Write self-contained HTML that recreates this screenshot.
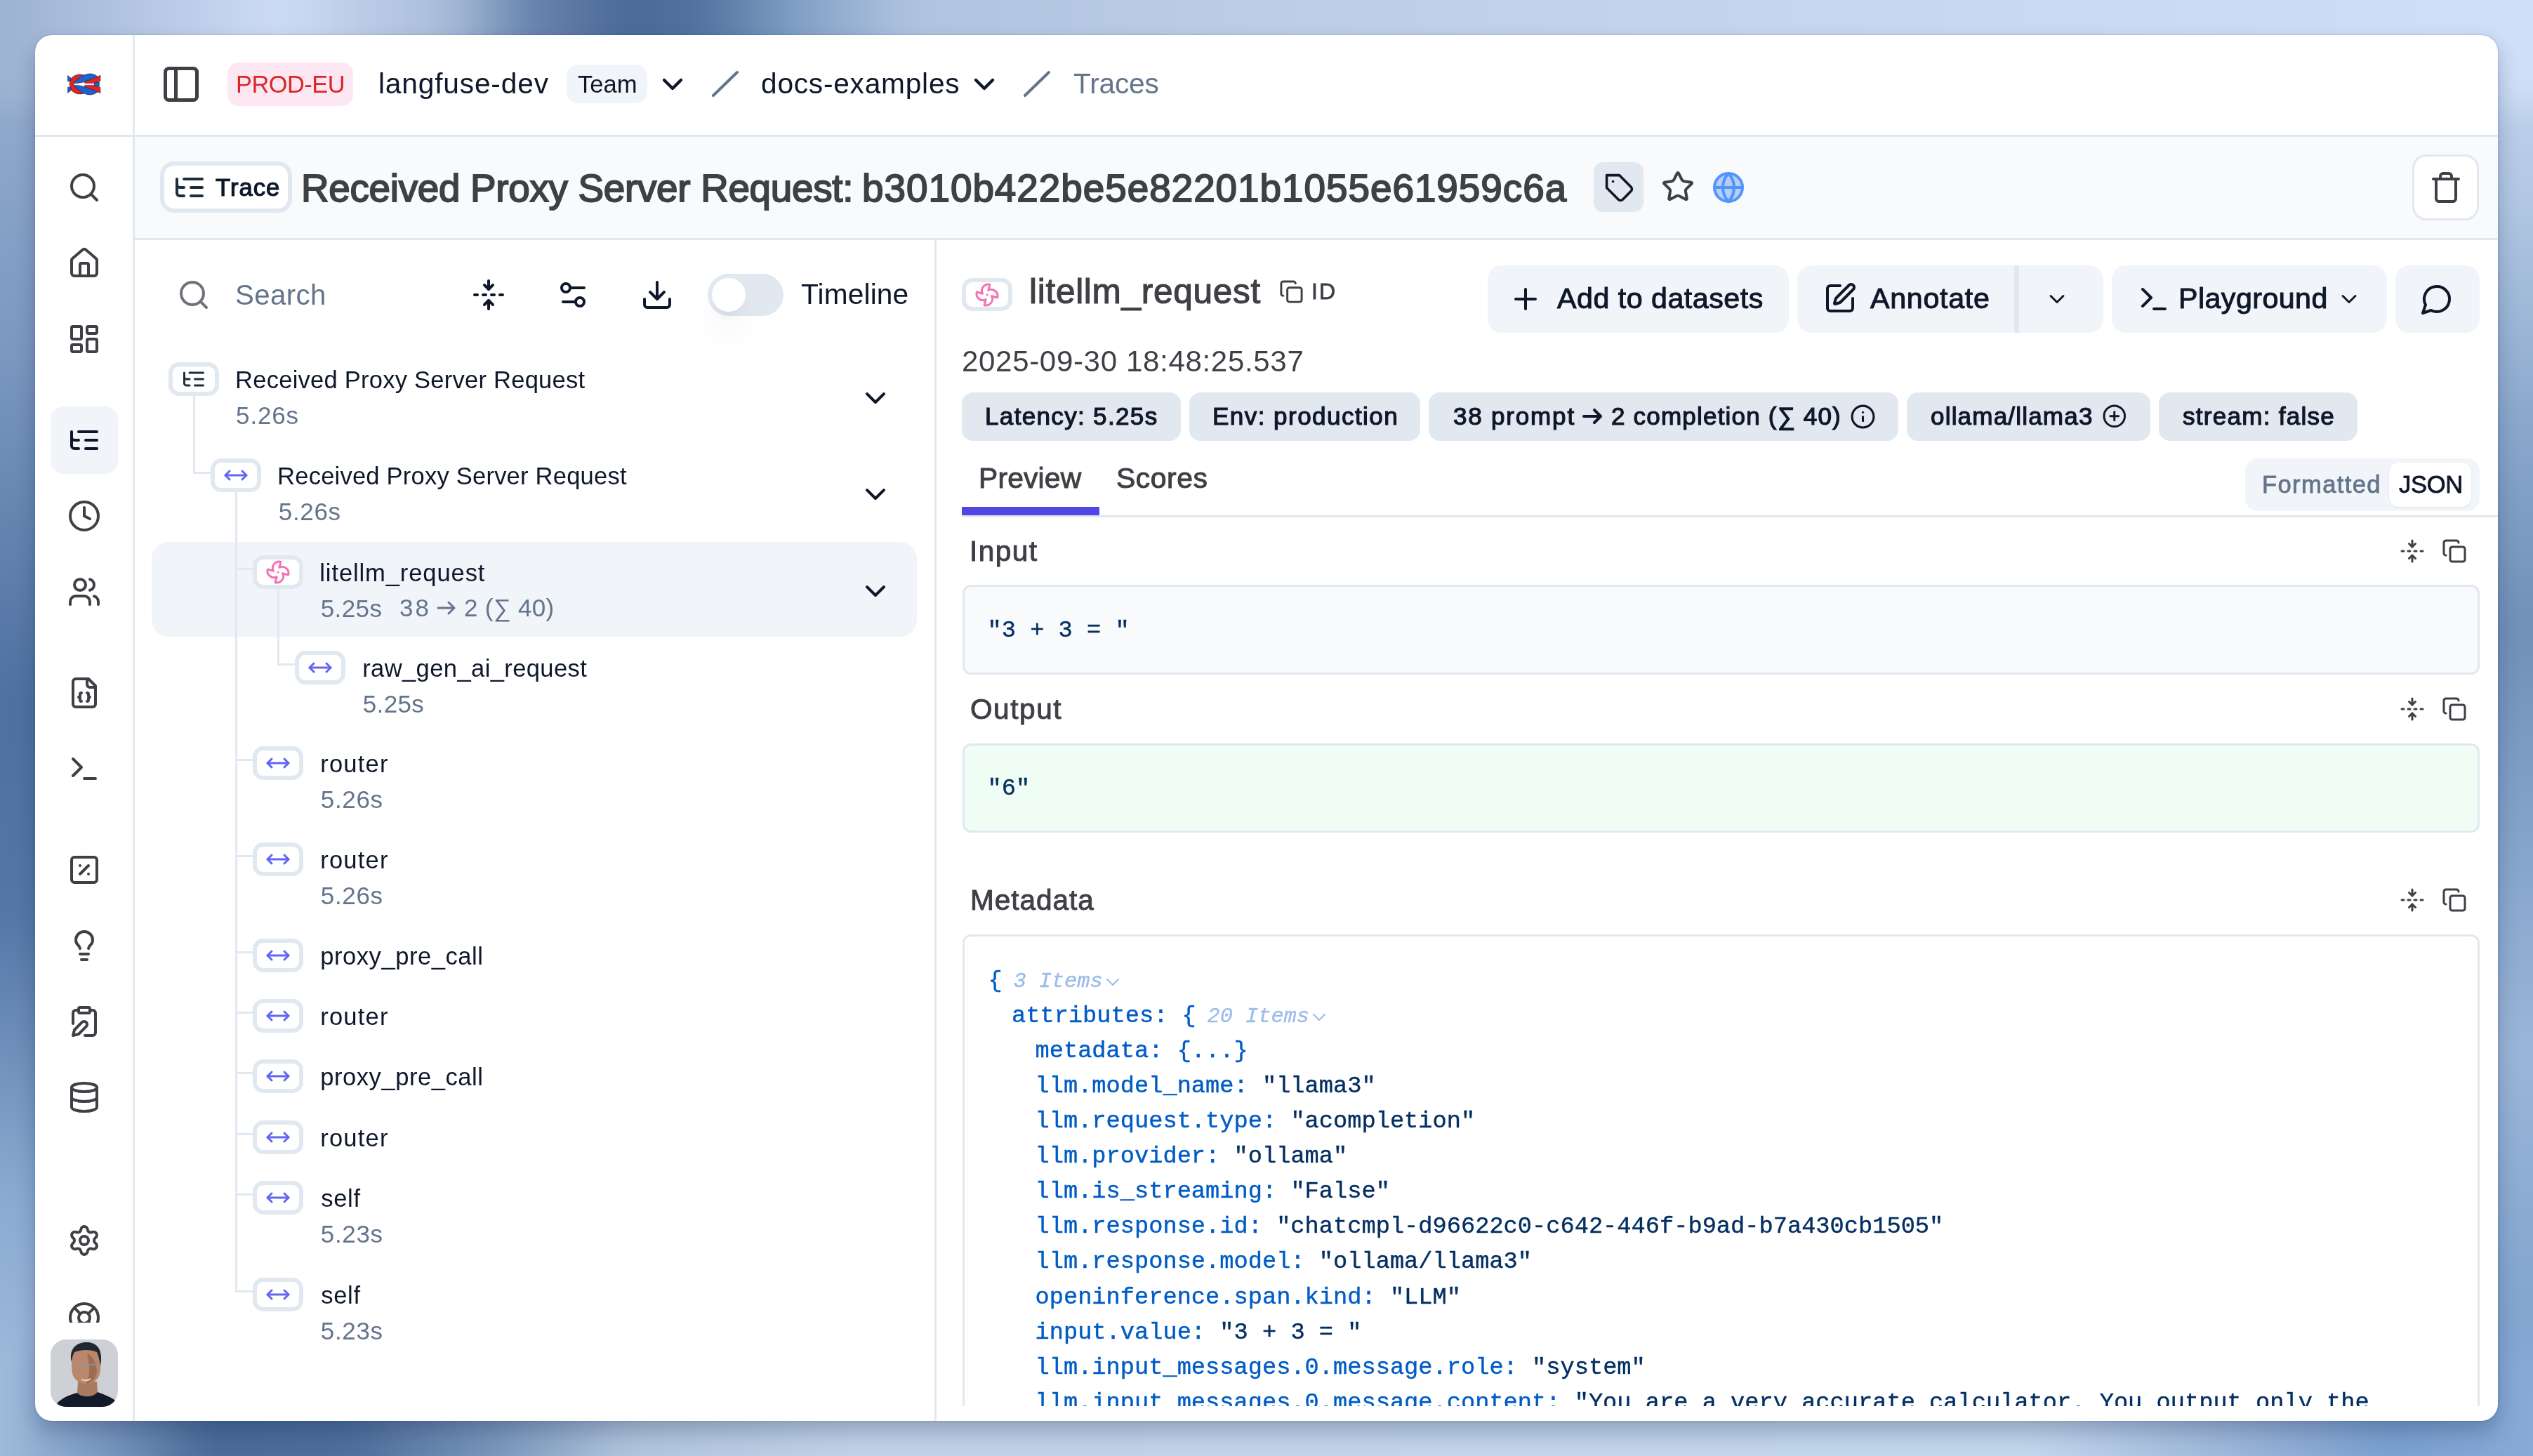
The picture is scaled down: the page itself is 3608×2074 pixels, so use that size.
<!DOCTYPE html><html><head><meta charset="utf-8"><style>
*{margin:0;padding:0;box-sizing:border-box}
html,body{width:3608px;height:2074px;overflow:hidden}
body{position:relative;font-family:"Liberation Sans",sans-serif;background:#a9bedc}
.bgc{position:absolute;left:0;top:0;width:3608px;height:2074px;overflow:hidden;background:#9fb6d6}
.bgb{position:absolute;left:0;top:0;width:3608px;height:2074px;filter:blur(24px)}
.bgold{display:none;
background:
 linear-gradient(90deg,#9cb2d2 0px,#cddbf5 400px,#a8bcd8 640px,#6a86b0 750px,#4a6896 900px,#5274a0 1000px,#86a4c8 1150px,#b0c4e0 1300px,#bccde6 1800px,#c6d6ee 2600px,#cfdff8 3608px) top/100% 60px no-repeat,
 linear-gradient(90deg,#a0bcdc 0px,#7898c0 150px,#4a6a98 400px,#6a8ab8 700px,#9ab4d4 1000px,#b8cce4 1200px,#c0d4ea 1800px,#c2d6ec 2900px,#9ab4d8 3200px,#7aa0d0 3400px,#88aad6 3608px) bottom/100% 60px no-repeat,
 linear-gradient(180deg,#9ab0d0 0px,#7a98c0 500px,#4e70a0 1000px,#5476a6 1300px,#8aaad0 1700px,#a4c0e0 2074px) left/60px 100% no-repeat,
 linear-gradient(180deg,#c8daf2 0px,#b0c6e2 300px,#8aa8cc 600px,#7090b8 900px,#7e9ec6 1100px,#9ab6d8 1500px,#86a8d0 1800px,#7aa2d0 2074px) right/60px 100% no-repeat,
 #a9bedc;}
.r{position:absolute}
.t{position:absolute;white-space:pre;line-height:1}
.i{position:absolute;overflow:visible}
.clip{position:absolute;overflow:hidden}
</style></head><body><div class="bgc"><div class="bgb"><div class="r" style="left:-150px;top:-150px;width:300px;height:2374px;background:linear-gradient(180deg,#9ab0d0 0px,#9ab0d0 150px,#7a98c0 650px,#4e70a0 1150px,#5476a6 1450px,#8aaad0 1850px,#a4c0e0 2224px,#a4c0e0 2374px)"></div><div class="r" style="left:3458px;top:-150px;width:300px;height:2374px;background:linear-gradient(180deg,#c8daf2 0px,#c8daf2 150px,#b0c6e2 450px,#8aa8cc 750px,#7090b8 1050px,#7e9ec6 1250px,#9ab6d8 1650px,#86a8d0 1950px,#7aa2d0 2224px,#7aa2d0 2374px)"></div><div class="r" style="left:-150px;top:-150px;width:3908px;height:300px;background:linear-gradient(90deg,#9cb2d2 0px,#9cb2d2 150px,#cddbf5 550px,#a8bcd8 790px,#6a86b0 900px,#4a6896 1050px,#5274a0 1150px,#86a4c8 1300px,#b0c4e0 1450px,#bccde6 1950px,#c6d6ee 2750px,#cfdff8 3758px,#cfdff8 3908px);border-radius:0 0 0 0"></div><div class="r" style="left:-150px;top:1924px;width:3908px;height:300px;background:linear-gradient(90deg,#a0bcdc 0px,#a0bcdc 150px,#7898c0 300px,#4a6a98 450px,#4e6e9c 650px,#7a98bc 862px,#b0c4dc 1040px,#c0d2e8 1360px,#c2d4ea 1954px,#c2d6ec 3050px,#9ab4d8 3350px,#7aa0d0 3550px,#88aad6 3758px,#88aad6 3908px)"></div></div></div>
<div class="r" style="left:50.00px;top:50.00px;width:3508.00px;height:1974.00px;background:#fff;border-radius:24px;box-shadow:0 0 3px rgba(30,50,90,0.28),0 16px 30px rgba(20,40,80,0.28);"></div>
<div class="r" style="left:50.00px;top:192.00px;width:3508.00px;height:3.00px;background:#e2e8f0;"></div>
<div class="r" style="left:189.00px;top:50.00px;width:3.00px;height:1974.00px;background:#e2e8f0;"></div>
<svg class="i" style="left:96px;top:104px;width:48px;height:32px" viewBox="0 0 48 32.4"><g stroke="#1a1a1a" stroke-width="0.55" stroke-linejoin="round"><path d="M38.3 13 L45.6 13 L45.6 19.4 L38.3 19.4 Z" fill="#1f5fd0"/><path d="M22.5 2.6 C12 0.2 2.8 6 2.8 16.2 C2.8 26.4 12 32.2 22.5 29.8 L22 24.4 C13 23 9.1 19.4 9.1 16.2 C9.1 13 13 9.5 22 8 Z" fill="#e02424"/><path d="M0.3 3.6 L5 7.5 L4.6 11.2 L0.3 12.2 Z" fill="#1f5fd0"/><path d="M10 12.6 C15 9 18 5 22 3.6 C27 1.5 31 0.6 35 1.2 C39 2 42 3.8 44.2 6 L41 9.6 C36 9.2 31 10.4 26 12.2 C20 14 15 14.8 10.2 14.8 Z" fill="#1f5fd0"/><g transform="matrix(1 0 0 -1 0 32.4)"><path d="M0.3 3.6 L5 7.5 L4.6 11.2 L0.3 12.2 Z" fill="#1f5fd0"/><path d="M10 12.6 C15 9 18 5 22 3.6 C27 1.5 31 0.6 35 1.2 C39 2 42 3.8 44.2 6 L41 9.6 C36 9.2 31 10.4 26 12.2 C20 14 15 14.8 10.2 14.8 Z" fill="#1f5fd0"/></g><path d="M24 12.8 C32 10 40 7 47.2 3.4 L47.2 11.6 C43 12.6 40 14.2 37 14.8 L25 14.8 Z" fill="#e02424"/><g transform="matrix(1 0 0 -1 0 32.4)"><path d="M24 12.8 C32 10 40 7 47.2 3.4 L47.2 11.6 C43 12.6 40 14.2 37 14.8 L25 14.8 Z" fill="#e02424"/></g></g></svg>
<svg class="i" style="left:228.00px;top:90.00px;width:60.00px;height:60.00px;" viewBox="0 0 24 24" fill="none" stroke="#3f3f46" stroke-width="2" stroke-linecap="round" stroke-linejoin="round"><rect width="18" height="18" x="3" y="3" rx="2"/><path d="M9 3v18"/></svg>
<div class="r" style="left:324.00px;top:89.00px;width:179.00px;height:61.50px;background:#fce7f3;border-radius:16px;"></div>
<div class="t" style="left:336.00px;top:102.67px;font-size:34.40px;color:#dc2626;letter-spacing:-0.500px;">PROD-EU</div>
<div class="t" style="left:539.00px;top:99.34px;font-size:40.70px;color:#0f172a;letter-spacing:0.818px;">langfuse-dev</div>
<div class="r" style="left:807.00px;top:92.00px;width:114.70px;height:55.30px;background:#f1f5f9;border-radius:16px;"></div>
<div class="t" style="left:823.00px;top:102.50px;font-size:34.60px;color:#0f172a;">Team</div>
<svg class="i" style="left:933.70px;top:96.00px;width:48.00px;height:48.00px;" viewBox="0 0 24 24" fill="none" stroke="#0f172a" stroke-width="2.2" stroke-linecap="round" stroke-linejoin="round"><path d="m6 9 6 6 6-6"/></svg>
<svg class="i" style="left:1010px;top:97px;width:46px;height:45px" viewBox="0 0 46 45"><path d="M6 39 L40 6" stroke="#64748b" stroke-width="4" stroke-linecap="round"/></svg>
<div class="t" style="left:1084.00px;top:99.34px;font-size:40.70px;color:#0f172a;letter-spacing:0.750px;">docs-examples</div>
<svg class="i" style="left:1377.50px;top:96.00px;width:48.00px;height:48.00px;" viewBox="0 0 24 24" fill="none" stroke="#0f172a" stroke-width="2.2" stroke-linecap="round" stroke-linejoin="round"><path d="m6 9 6 6 6-6"/></svg>
<svg class="i" style="left:1454px;top:97px;width:46px;height:45px" viewBox="0 0 46 45"><path d="M6 39 L40 6" stroke="#64748b" stroke-width="4" stroke-linecap="round"/></svg>
<div class="t" style="left:1529.00px;top:99.34px;font-size:40.70px;color:#64748b;letter-spacing:-0.200px;">Traces</div>
<div class="r" style="left:72.00px;top:579.00px;width:96.00px;height:96.00px;background:#f1f5f9;border-radius:18px;"></div>
<svg class="i" style="left:96.00px;top:243.00px;width:48.00px;height:48.00px;" viewBox="0 0 24 24" fill="none" stroke="#3f3f46" stroke-width="2" stroke-linecap="round" stroke-linejoin="round"><circle cx="11" cy="11" r="8"/><path d="m21 21-4.3-4.3"/></svg>
<svg class="i" style="left:96.00px;top:351.00px;width:48.00px;height:48.00px;" viewBox="0 0 24 24" fill="none" stroke="#3f3f46" stroke-width="2" stroke-linecap="round" stroke-linejoin="round"><path d="M15 21v-8a1 1 0 0 0-1-1h-4a1 1 0 0 0-1 1v8"/><path d="M3 10a2 2 0 0 1 .709-1.528l7-5.999a2 2 0 0 1 2.582 0l7 5.999A2 2 0 0 1 21 10v9a2 2 0 0 1-2 2H5a2 2 0 0 1-2-2z"/></svg>
<svg class="i" style="left:96.00px;top:459.00px;width:48.00px;height:48.00px;" viewBox="0 0 24 24" fill="none" stroke="#3f3f46" stroke-width="2" stroke-linecap="round" stroke-linejoin="round"><rect width="7" height="9" x="3" y="3" rx="1"/><rect width="7" height="5" x="14" y="3" rx="1"/><rect width="7" height="9" x="14" y="12" rx="1"/><rect width="7" height="5" x="3" y="16" rx="1"/></svg>
<svg class="i" style="left:96.00px;top:603.00px;width:48.00px;height:48.00px;" viewBox="0 0 24 24" fill="none" stroke="#0f172a" stroke-width="2" stroke-linecap="round" stroke-linejoin="round"><path d="M21 12h-8"/><path d="M21 6H8"/><path d="M21 18h-8"/><path d="M3 6v4c0 1.1.9 2 2 2h3"/><path d="M3 10v6c0 1.1.9 2 2 2h3"/></svg>
<svg class="i" style="left:96.00px;top:711.00px;width:48.00px;height:48.00px;" viewBox="0 0 24 24" fill="none" stroke="#3f3f46" stroke-width="2" stroke-linecap="round" stroke-linejoin="round"><circle cx="12" cy="12" r="10"/><polyline points="12 6 12 12 16 14"/></svg>
<svg class="i" style="left:96.00px;top:819.00px;width:48.00px;height:48.00px;" viewBox="0 0 24 24" fill="none" stroke="#3f3f46" stroke-width="2" stroke-linecap="round" stroke-linejoin="round"><path d="M16 21v-2a4 4 0 0 0-4-4H6a4 4 0 0 0-4 4v2"/><circle cx="9" cy="7" r="4"/><path d="M22 21v-2a4 4 0 0 0-3-3.87"/><path d="M16 3.13a4 4 0 0 1 0 7.75"/></svg>
<svg class="i" style="left:96.00px;top:963.00px;width:48.00px;height:48.00px;" viewBox="0 0 24 24" fill="none" stroke="#3f3f46" stroke-width="2" stroke-linecap="round" stroke-linejoin="round"><path d="M15 2H6a2 2 0 0 0-2 2v16a2 2 0 0 0 2 2h12a2 2 0 0 0 2-2V7Z"/><path d="M14 2v4a2 2 0 0 0 2 2h4"/><path d="M10 12a1 1 0 0 0-1 1v1a1 1 0 0 1-1 1 1 1 0 0 1 1 1v1a1 1 0 0 0 1 1"/><path d="M14 18a1 1 0 0 0 1-1v-1a1 1 0 0 1 1-1 1 1 0 0 1-1-1v-1a1 1 0 0 0-1-1"/></svg>
<svg class="i" style="left:96.00px;top:1071.00px;width:48.00px;height:48.00px;" viewBox="0 0 24 24" fill="none" stroke="#3f3f46" stroke-width="2" stroke-linecap="round" stroke-linejoin="round"><polyline points="4 17 10 11 4 5"/><line x1="12" x2="20" y1="19" y2="19"/></svg>
<svg class="i" style="left:96.00px;top:1215.00px;width:48.00px;height:48.00px;" viewBox="0 0 24 24" fill="none" stroke="#3f3f46" stroke-width="2" stroke-linecap="round" stroke-linejoin="round"><rect width="18" height="18" x="3" y="3" rx="2"/><path d="m15 9-6 6"/><path d="M9 9h.01"/><path d="M15 15h.01"/></svg>
<svg class="i" style="left:96.00px;top:1323.00px;width:48.00px;height:48.00px;" viewBox="0 0 24 24" fill="none" stroke="#3f3f46" stroke-width="2" stroke-linecap="round" stroke-linejoin="round"><path d="M15 14c.2-1 .7-1.7 1.5-2.5 1-.9 1.5-2.2 1.5-3.5A6 6 0 0 0 6 8c0 1 .2 2.2 1.5 3.5.7.7 1.3 1.5 1.5 2.5"/><path d="M9 18h6"/><path d="M10 22h4"/></svg>
<svg class="i" style="left:96.00px;top:1431.00px;width:48.00px;height:48.00px;" viewBox="0 0 24 24" fill="none" stroke="#3f3f46" stroke-width="2" stroke-linecap="round" stroke-linejoin="round"><rect width="8" height="4" x="8" y="2" rx="1"/><path d="M10.4 12.6a2 2 0 0 1 3 3L8 21l-4 1 1-4Z"/><path d="M16 4h2a2 2 0 0 1 2 2v14a2 2 0 0 1-2 2h-5.5"/><path d="M4 13.5V6a2 2 0 0 1 2-2h2"/></svg>
<svg class="i" style="left:96.00px;top:1539.00px;width:48.00px;height:48.00px;" viewBox="0 0 24 24" fill="none" stroke="#3f3f46" stroke-width="2" stroke-linecap="round" stroke-linejoin="round"><ellipse cx="12" cy="5" rx="9" ry="3"/><path d="M3 5V19A9 3 0 0 0 21 19V5"/><path d="M3 12A9 3 0 0 0 21 12"/></svg>
<svg class="i" style="left:96.00px;top:1743.00px;width:48.00px;height:48.00px;" viewBox="0 0 24 24" fill="none" stroke="#3f3f46" stroke-width="2" stroke-linecap="round" stroke-linejoin="round"><path d="M9.671 4.136a2.34 2.34 0 0 1 4.659 0 2.34 2.34 0 0 0 3.319 1.915 2.34 2.34 0 0 1 2.33 4.033 2.34 2.34 0 0 0 0 3.831 2.34 2.34 0 0 1-2.33 4.033 2.34 2.34 0 0 0-3.319 1.915 2.34 2.34 0 0 1-4.659 0 2.34 2.34 0 0 0-3.32-1.915 2.34 2.34 0 0 1-2.33-4.033 2.34 2.34 0 0 0 0-3.831A2.34 2.34 0 0 1 6.35 6.051a2.34 2.34 0 0 0 3.319-1.915"/><circle cx="12" cy="12" r="3"/></svg>
<div class="clip" style="left:72px;top:1840px;width:96px;height:44px;">
<svg class="i" style="left:24px;top:13px;width:48px;height:48px" viewBox="0 0 24 24" fill="none" stroke="#3f3f46" stroke-width="2" stroke-linecap="round" stroke-linejoin="round"><circle cx="12" cy="12" r="10"/><path d="m4.93 4.93 4.24 4.24"/><path d="m14.83 9.17 4.24-4.24"/><path d="m14.83 14.83 4.24 4.24"/><path d="m9.17 14.83-4.24 4.24"/><circle cx="12" cy="12" r="4"/></svg>
</div>
<div class="r" style="left:72px;top:1908px;width:96px;height:96px;border-radius:22px;overflow:hidden;background:#cdd1d6;"><svg style="position:absolute;left:0;top:0;width:96px;height:96px" viewBox="0 0 96 96"><path d="M39 60 L66 60 L68 90 L37 90 Z" fill="#a97a60"/><path d="M29.5 22 C29 10 40 4.5 51 4.5 C63 4.5 72 12 71.5 26 L71 44 C70 56 62 63 51 63 C40 63 31 56 30.5 44 Z" fill="#b9876b"/><path d="M52 20 C60 24 66 34 66 46 C64 56 58 62 51 63 C56 54 57 40 52 20 Z" fill="#8f6048" opacity="0.7"/><path d="M29 28 C28 10 40 4 51 4 C64 4 73 11 72 30 L71 38 C70 30 68 22 66 18 C58 14 44 14 34 18 C32 22 30.5 26 30 32 Z" fill="#1e2830"/><path d="M31 36 L70 36" stroke="#8a96a3" stroke-width="1.6"/><path d="M8 96 L10 90 C18 82 30 78 38 76 C42 82 60 84 67 75 C76 78 86 82 94 88 L96 96 Z" fill="#131a2b"/><path d="M44 57 C48 59 54 59 57 56" stroke="#e8e0da" stroke-width="1.8" fill="none"/></svg></div>
<div class="r" style="left:192.00px;top:195.00px;width:3366.00px;height:144.00px;background:#f8fafc;"></div>
<div class="r" style="left:192.00px;top:339.00px;width:3366.00px;height:3.00px;background:#e2e8f0;"></div>
<div class="r" style="left:228.00px;top:230.00px;width:188.00px;height:73.00px;background:#fff;border:6px solid #e2e8f0;border-radius:20px;box-sizing:border-box;"></div>
<svg class="i" style="left:246.00px;top:243.00px;width:48.00px;height:48.00px;" viewBox="0 0 24 24" fill="none" stroke="#1e2f3b" stroke-width="2" stroke-linecap="round" stroke-linejoin="round"><path d="M21 12h-8"/><path d="M21 6H8"/><path d="M21 18h-8"/><path d="M3 6v4c0 1.1.9 2 2 2h3"/><path d="M3 10v6c0 1.1.9 2 2 2h3"/></svg>
<div class="t" style="left:307.00px;top:249.52px;font-size:34.70px;color:#0f172a;-webkit-text-stroke:1.18px #0f172a;letter-spacing:1.000px;">Trace</div>
<div class="t" style="left:429.00px;top:240.70px;font-size:54.80px;color:#3f3f46;-webkit-text-stroke:1.86px #3f3f46;letter-spacing:-0.293px;">Received Proxy Server Request:</div>
<div class="t" style="left:1228.00px;top:240.70px;font-size:54.80px;color:#3f3f46;-webkit-text-stroke:1.86px #3f3f46;letter-spacing:1.000px;">b3010b422be5e82201b1055e61959c6a</div>
<div class="r" style="left:2270.00px;top:231.00px;width:71.00px;height:71.00px;background:#e2e8f0;border-radius:14px;"></div>
<svg class="i" style="left:2284.50px;top:245.50px;width:43.00px;height:43.00px;" viewBox="0 0 24 24" fill="none" stroke="#0f172a" stroke-width="2" stroke-linecap="round" stroke-linejoin="round"><path d="M12 2H2v10l9.29 9.29c.94.94 2.48.94 3.42 0l6.58-6.58c.94-.94.94-2.48 0-3.42L12 2Z"/><path d="M7 7h.01"/></svg>
<svg class="i" style="left:2366.00px;top:242.00px;width:48.00px;height:48.00px;" viewBox="0 0 24 24" fill="none" stroke="#3f3f46" stroke-width="2" stroke-linecap="round" stroke-linejoin="round"><path d="M11.525 2.295a.53.53 0 0 1 .95 0l2.31 4.679a2.123 2.123 0 0 0 1.595 1.16l5.166.756a.53.53 0 0 1 .294.904l-3.736 3.638a2.123 2.123 0 0 0-.611 1.878l.882 5.14a.53.53 0 0 1-.771.56l-4.618-2.428a2.122 2.122 0 0 0-1.973 0L6.396 21.01a.53.53 0 0 1-.77-.56l.881-5.139a2.122 2.122 0 0 0-.611-1.879L2.16 9.795a.53.53 0 0 1 .294-.906l5.165-.755a2.122 2.122 0 0 0 1.597-1.16z"/></svg>
<svg class="i" style="left:2438.00px;top:243.00px;width:48.00px;height:48.00px;" viewBox="0 0 24 24" fill="none" stroke="#4f96ff" stroke-width="2" stroke-linecap="round" stroke-linejoin="round"><circle cx="12" cy="12" r="10" fill="#b9cdf3"/><path d="M12 2a14.5 14.5 0 0 0 0 20 14.5 14.5 0 0 0 0-20"/><path d="M2 12h20"/></svg>
<div class="r" style="left:3436.00px;top:219.50px;width:95.00px;height:94.50px;background:#fff;border:3px solid #e2e8f0;border-radius:20px;box-sizing:border-box;"></div>
<svg class="i" style="left:3459.50px;top:243.00px;width:48.00px;height:48.00px;" viewBox="0 0 24 24" fill="none" stroke="#3f3f46" stroke-width="2" stroke-linecap="round" stroke-linejoin="round"><path d="M3 6h18"/><path d="M19 6v14c0 1-1 2-2 2H7c-1 0-2-1-2-2V6"/><path d="M8 6V4c0-1 1-2 2-2h4c1 0 2 1 2 2v2"/></svg>
<div class="r" style="left:1331.00px;top:342.00px;width:3.00px;height:1682.00px;background:#e2e8f0;"></div>
<svg class="i" style="left:252.00px;top:396.00px;width:48.00px;height:48.00px;" viewBox="0 0 24 24" fill="none" stroke="#71717a" stroke-width="2" stroke-linecap="round" stroke-linejoin="round"><circle cx="11" cy="11" r="8"/><path d="m21 21-4.3-4.3"/></svg>
<div class="t" style="left:335.00px;top:400.56px;font-size:40.20px;color:#64748b;letter-spacing:0.400px;">Search</div>
<svg class="i" style="left:672.00px;top:396.00px;width:48.00px;height:48.00px;" viewBox="0 0 24 24" fill="none" stroke="#0f172a" stroke-width="2" stroke-linecap="round" stroke-linejoin="round"><path d="M12 22v-6"/><path d="M12 8V2"/><path d="M4 12H2"/><path d="M10 12H8"/><path d="M16 12h-2"/><path d="M22 12h-2"/><path d="m15 19-3-3-3 3"/><path d="m15 5-3 3-3-3"/></svg>
<svg class="i" style="left:792.00px;top:396.00px;width:48.00px;height:48.00px;" viewBox="0 0 24 24" fill="none" stroke="#0f172a" stroke-width="2" stroke-linecap="round" stroke-linejoin="round"><path d="M20 7h-9"/><path d="M14 17H5"/><circle cx="17" cy="17" r="3"/><circle cx="7" cy="7" r="3"/></svg>
<svg class="i" style="left:912.00px;top:396.00px;width:48.00px;height:48.00px;" viewBox="0 0 24 24" fill="none" stroke="#0f172a" stroke-width="2" stroke-linecap="round" stroke-linejoin="round"><path d="M21 15v4a2 2 0 0 1-2 2H5a2 2 0 0 1-2-2v-4"/><polyline points="7 10 12 15 17 10"/><line x1="12" x2="12" y1="15" y2="3"/></svg>
<div class="r" style="left:1008.20px;top:390.00px;width:107.80px;height:59.70px;background:#e2e8f0;border-radius:30px;"></div>
<div class="r" style="left:1013.90px;top:395.80px;width:48.00px;height:48.00px;background:#fff;border-radius:50%;box-shadow:0 30px 45px -9px rgba(0,0,0,0.1),0 12px 18px -12px rgba(0,0,0,0.1);"></div>
<div class="t" style="left:1141.00px;top:399.34px;font-size:40.70px;color:#0f172a;letter-spacing:0.143px;">Timeline</div>
<div class="r" style="left:216.00px;top:772.00px;width:1090.00px;height:135.00px;background:#f1f5f9;border-radius:24px;"></div>
<div class="r" style="left:275.00px;top:563.00px;width:3.00px;height:111.50px;background:#e2e8f0;"></div>
<div class="r" style="left:275.00px;top:671.50px;width:25.00px;height:3.00px;background:#e2e8f0;"></div>
<div class="r" style="left:335.00px;top:700.00px;width:3.00px;height:1140.50px;background:#e2e8f0;"></div>
<div class="r" style="left:335.00px;top:808.50px;width:25.00px;height:3.00px;background:#e2e8f0;"></div>
<div class="r" style="left:335.00px;top:1080.50px;width:25.00px;height:3.00px;background:#e2e8f0;"></div>
<div class="r" style="left:335.00px;top:1217.50px;width:25.00px;height:3.00px;background:#e2e8f0;"></div>
<div class="r" style="left:335.00px;top:1354.50px;width:25.00px;height:3.00px;background:#e2e8f0;"></div>
<div class="r" style="left:335.00px;top:1440.50px;width:25.00px;height:3.00px;background:#e2e8f0;"></div>
<div class="r" style="left:335.00px;top:1526.50px;width:25.00px;height:3.00px;background:#e2e8f0;"></div>
<div class="r" style="left:335.00px;top:1613.50px;width:25.00px;height:3.00px;background:#e2e8f0;"></div>
<div class="r" style="left:335.00px;top:1699.50px;width:25.00px;height:3.00px;background:#e2e8f0;"></div>
<div class="r" style="left:335.00px;top:1837.50px;width:25.00px;height:3.00px;background:#e2e8f0;"></div>
<div class="r" style="left:395.00px;top:837.00px;width:3.00px;height:110.50px;background:#e2e8f0;"></div>
<div class="r" style="left:395.00px;top:944.50px;width:25.00px;height:3.00px;background:#e2e8f0;"></div>
<div class="r" style="left:240.00px;top:516.00px;width:72.00px;height:48.00px;background:#fff;border:6px solid #e2e8f0;border-radius:15px;box-sizing:border-box;"></div>
<svg class="i" style="left:258.00px;top:522.00px;width:36.00px;height:36.00px;" viewBox="0 0 24 24" fill="none" stroke="#1e2f3b" stroke-width="2" stroke-linecap="round" stroke-linejoin="round"><path d="M21 12h-8"/><path d="M21 6H8"/><path d="M21 18h-8"/><path d="M3 6v4c0 1.1.9 2 2 2h3"/><path d="M3 10v6c0 1.1.9 2 2 2h3"/></svg>
<div class="t" style="left:335.10px;top:523.60px;font-size:34.60px;color:#0f172a;letter-spacing:0.214px;">Received Proxy Server Request</div>
<div class="t" style="left:336.10px;top:574.17px;font-size:35.00px;color:#64748b;letter-spacing:0.850px;">5.26s</div>
<svg class="i" style="left:1223.00px;top:542.50px;width:48.00px;height:48.00px;" viewBox="0 0 24 24" fill="none" stroke="#0f172a" stroke-width="2" stroke-linecap="round" stroke-linejoin="round"><path d="m6 9 6 6 6-6"/></svg>
<div class="r" style="left:300.00px;top:653.00px;width:72.00px;height:48.00px;background:#fff;border:6px solid #e2e8f0;border-radius:15px;box-sizing:border-box;"></div>
<svg class="i" style="left:318.00px;top:659.00px;width:36.00px;height:36.00px;" viewBox="0 0 24 24" fill="none" stroke="#6366f1" stroke-width="2" stroke-linecap="round" stroke-linejoin="round"><path d="m18 8 4 4-4 4"/><path d="M2 12h20"/><path d="m6 8-4 4 4 4"/></svg>
<div class="t" style="left:395.10px;top:660.60px;font-size:34.60px;color:#0f172a;letter-spacing:0.193px;">Received Proxy Server Request</div>
<div class="t" style="left:396.80px;top:711.17px;font-size:35.00px;color:#64748b;letter-spacing:0.675px;">5.26s</div>
<svg class="i" style="left:1223.00px;top:679.50px;width:48.00px;height:48.00px;" viewBox="0 0 24 24" fill="none" stroke="#0f172a" stroke-width="2" stroke-linecap="round" stroke-linejoin="round"><path d="m6 9 6 6 6-6"/></svg>
<div class="r" style="left:360.00px;top:791.00px;width:72.00px;height:48.00px;background:#fff;border:6px solid #e2e8f0;border-radius:15px;box-sizing:border-box;"></div>
<svg class="i" style="left:378.00px;top:797.00px;width:36.00px;height:36.00px;" viewBox="0 0 24 24" fill="none" stroke="#f472b6" stroke-width="2" stroke-linecap="round" stroke-linejoin="round"><path d="M10.827 16.379a6.082 6.082 0 0 1-8.618-7.002l5.412 1.45a6.082 6.082 0 0 1 7.002-8.618l-1.45 5.412a6.082 6.082 0 0 1 8.618 7.002l-5.412-1.45a6.082 6.082 0 0 1-7.002 8.618l1.45-5.412Z"/><path d="M12 12v.01"/></svg>
<div class="t" style="left:455.30px;top:798.60px;font-size:34.60px;color:#0f172a;letter-spacing:0.871px;">litellm_request</div>
<div class="t" style="left:456.70px;top:849.17px;font-size:35.00px;color:#64748b;letter-spacing:0.425px;">5.25s</div>
<div class="t" style="left:569.00px;top:847.77px;font-size:35.00px;color:#64748b;letter-spacing:3.000px;">38</div>
<svg class="i" style="left:621px;top:853px;width:30px;height:26px" viewBox="0 0 30 26"><path d="M3 13h23M18 5l8 8-8 8" fill="none" stroke="#64748b" stroke-width="3" stroke-linecap="round" stroke-linejoin="round"/></svg>
<div class="t" style="left:661.00px;top:847.77px;font-size:35.00px;color:#64748b;letter-spacing:0.286px;">2 (∑ 40)</div>
<svg class="i" style="left:1223.00px;top:817.50px;width:48.00px;height:48.00px;" viewBox="0 0 24 24" fill="none" stroke="#0f172a" stroke-width="2" stroke-linecap="round" stroke-linejoin="round"><path d="m6 9 6 6 6-6"/></svg>
<div class="r" style="left:420.00px;top:927.00px;width:72.00px;height:48.00px;background:#fff;border:6px solid #e2e8f0;border-radius:15px;box-sizing:border-box;"></div>
<svg class="i" style="left:438.00px;top:933.00px;width:36.00px;height:36.00px;" viewBox="0 0 24 24" fill="none" stroke="#6366f1" stroke-width="2" stroke-linecap="round" stroke-linejoin="round"><path d="m18 8 4 4-4 4"/><path d="M2 12h20"/><path d="m6 8-4 4 4 4"/></svg>
<div class="t" style="left:516.20px;top:934.60px;font-size:34.60px;color:#0f172a;letter-spacing:0.371px;">raw_gen_ai_request</div>
<div class="t" style="left:516.80px;top:985.17px;font-size:35.00px;color:#64748b;letter-spacing:0.350px;">5.25s</div>
<div class="r" style="left:360.00px;top:1063.00px;width:72.00px;height:48.00px;background:#fff;border:6px solid #e2e8f0;border-radius:15px;box-sizing:border-box;"></div>
<svg class="i" style="left:378.00px;top:1069.00px;width:36.00px;height:36.00px;" viewBox="0 0 24 24" fill="none" stroke="#6366f1" stroke-width="2" stroke-linecap="round" stroke-linejoin="round"><path d="m18 8 4 4-4 4"/><path d="M2 12h20"/><path d="m6 8-4 4 4 4"/></svg>
<div class="t" style="left:456.30px;top:1070.60px;font-size:34.60px;color:#0f172a;letter-spacing:1.160px;">router</div>
<div class="t" style="left:456.80px;top:1121.17px;font-size:35.00px;color:#64748b;letter-spacing:0.650px;">5.26s</div>
<div class="r" style="left:360.00px;top:1200.00px;width:72.00px;height:48.00px;background:#fff;border:6px solid #e2e8f0;border-radius:15px;box-sizing:border-box;"></div>
<svg class="i" style="left:378.00px;top:1206.00px;width:36.00px;height:36.00px;" viewBox="0 0 24 24" fill="none" stroke="#6366f1" stroke-width="2" stroke-linecap="round" stroke-linejoin="round"><path d="m18 8 4 4-4 4"/><path d="M2 12h20"/><path d="m6 8-4 4 4 4"/></svg>
<div class="t" style="left:456.30px;top:1207.60px;font-size:34.60px;color:#0f172a;letter-spacing:1.160px;">router</div>
<div class="t" style="left:456.80px;top:1258.17px;font-size:35.00px;color:#64748b;letter-spacing:0.650px;">5.26s</div>
<div class="r" style="left:360.00px;top:1337.00px;width:72.00px;height:48.00px;background:#fff;border:6px solid #e2e8f0;border-radius:15px;box-sizing:border-box;"></div>
<svg class="i" style="left:378.00px;top:1343.00px;width:36.00px;height:36.00px;" viewBox="0 0 24 24" fill="none" stroke="#6366f1" stroke-width="2" stroke-linecap="round" stroke-linejoin="round"><path d="m18 8 4 4-4 4"/><path d="M2 12h20"/><path d="m6 8-4 4 4 4"/></svg>
<div class="t" style="left:456.30px;top:1344.60px;font-size:34.60px;color:#0f172a;letter-spacing:0.515px;">proxy_pre_call</div>
<div class="r" style="left:360.00px;top:1423.00px;width:72.00px;height:48.00px;background:#fff;border:6px solid #e2e8f0;border-radius:15px;box-sizing:border-box;"></div>
<svg class="i" style="left:378.00px;top:1429.00px;width:36.00px;height:36.00px;" viewBox="0 0 24 24" fill="none" stroke="#6366f1" stroke-width="2" stroke-linecap="round" stroke-linejoin="round"><path d="m18 8 4 4-4 4"/><path d="M2 12h20"/><path d="m6 8-4 4 4 4"/></svg>
<div class="t" style="left:456.30px;top:1430.60px;font-size:34.60px;color:#0f172a;letter-spacing:1.160px;">router</div>
<div class="r" style="left:360.00px;top:1509.00px;width:72.00px;height:48.00px;background:#fff;border:6px solid #e2e8f0;border-radius:15px;box-sizing:border-box;"></div>
<svg class="i" style="left:378.00px;top:1515.00px;width:36.00px;height:36.00px;" viewBox="0 0 24 24" fill="none" stroke="#6366f1" stroke-width="2" stroke-linecap="round" stroke-linejoin="round"><path d="m18 8 4 4-4 4"/><path d="M2 12h20"/><path d="m6 8-4 4 4 4"/></svg>
<div class="t" style="left:456.30px;top:1516.60px;font-size:34.60px;color:#0f172a;letter-spacing:0.515px;">proxy_pre_call</div>
<div class="r" style="left:360.00px;top:1596.00px;width:72.00px;height:48.00px;background:#fff;border:6px solid #e2e8f0;border-radius:15px;box-sizing:border-box;"></div>
<svg class="i" style="left:378.00px;top:1602.00px;width:36.00px;height:36.00px;" viewBox="0 0 24 24" fill="none" stroke="#6366f1" stroke-width="2" stroke-linecap="round" stroke-linejoin="round"><path d="m18 8 4 4-4 4"/><path d="M2 12h20"/><path d="m6 8-4 4 4 4"/></svg>
<div class="t" style="left:456.30px;top:1603.60px;font-size:34.60px;color:#0f172a;letter-spacing:1.160px;">router</div>
<div class="r" style="left:360.00px;top:1682.00px;width:72.00px;height:48.00px;background:#fff;border:6px solid #e2e8f0;border-radius:15px;box-sizing:border-box;"></div>
<svg class="i" style="left:378.00px;top:1688.00px;width:36.00px;height:36.00px;" viewBox="0 0 24 24" fill="none" stroke="#6366f1" stroke-width="2" stroke-linecap="round" stroke-linejoin="round"><path d="m18 8 4 4-4 4"/><path d="M2 12h20"/><path d="m6 8-4 4 4 4"/></svg>
<div class="t" style="left:457.30px;top:1689.60px;font-size:34.60px;color:#0f172a;letter-spacing:0.633px;">self</div>
<div class="t" style="left:456.80px;top:1740.17px;font-size:35.00px;color:#64748b;letter-spacing:0.650px;">5.23s</div>
<div class="r" style="left:360.00px;top:1820.00px;width:72.00px;height:48.00px;background:#fff;border:6px solid #e2e8f0;border-radius:15px;box-sizing:border-box;"></div>
<svg class="i" style="left:378.00px;top:1826.00px;width:36.00px;height:36.00px;" viewBox="0 0 24 24" fill="none" stroke="#6366f1" stroke-width="2" stroke-linecap="round" stroke-linejoin="round"><path d="m18 8 4 4-4 4"/><path d="M2 12h20"/><path d="m6 8-4 4 4 4"/></svg>
<div class="t" style="left:457.30px;top:1827.60px;font-size:34.60px;color:#0f172a;letter-spacing:0.633px;">self</div>
<div class="t" style="left:456.80px;top:1878.17px;font-size:35.00px;color:#64748b;letter-spacing:0.650px;">5.23s</div>
<div class="r" style="left:1370.00px;top:396.00px;width:71.50px;height:47.00px;background:#fff;border:6px solid #e2e8f0;border-radius:15px;box-sizing:border-box;"></div>
<svg class="i" style="left:1387.75px;top:401.50px;width:36.00px;height:36.00px;" viewBox="0 0 24 24" fill="none" stroke="#f472b6" stroke-width="2" stroke-linecap="round" stroke-linejoin="round"><path d="M10.827 16.379a6.082 6.082 0 0 1-8.618-7.002l5.412 1.45a6.082 6.082 0 0 1 7.002-8.618l-1.45 5.412a6.082 6.082 0 0 1 8.618 7.002l-5.412-1.45a6.082 6.082 0 0 1-7.002 8.618l1.45-5.412Z"/><path d="M12 12v.01"/></svg>
<div class="t" style="left:1466.00px;top:389.89px;font-size:49.50px;color:#3f3f46;-webkit-text-stroke:1.19px #3f3f46;letter-spacing:0.714px;">litellm_request</div>
<svg class="i" style="left:1821.50px;top:397.80px;width:35.00px;height:35.00px;" viewBox="0 0 24 24" fill="none" stroke="#3f3f46" stroke-width="2" stroke-linecap="round" stroke-linejoin="round"><rect width="14" height="14" x="8" y="8" rx="2" ry="2"/><path d="M4 16c-1.1 0-2-.9-2-2V4c0-1.1.9-2 2-2h10c1.1 0 2 .9 2 2"/></svg>
<div class="t" style="left:1868.00px;top:398.91px;font-size:32.00px;color:#3f3f46;-webkit-text-stroke:0.77px #3f3f46;letter-spacing:2.000px;">ID</div>
<div class="t" style="left:1370.00px;top:494.45px;font-size:42.10px;color:#3f3f46;letter-spacing:0.636px;">2025-09-30 18:48:25.537</div>
<div class="r" style="left:2118.80px;top:377.80px;width:429.00px;height:95.90px;background:#f1f5f9;border-radius:20px;"></div>
<svg class="i" style="left:2149.00px;top:401.70px;width:48.00px;height:48.00px;" viewBox="0 0 24 24" fill="none" stroke="#0f172a" stroke-width="2" stroke-linecap="round" stroke-linejoin="round"><path d="M5 12h14"/><path d="M12 5v14"/></svg>
<div class="t" style="left:2218.00px;top:404.92px;font-size:41.20px;color:#0f172a;-webkit-text-stroke:0.99px #0f172a;letter-spacing:0.500px;">Add to datasets</div>
<div class="r" style="left:2560.00px;top:377.80px;width:435.50px;height:95.90px;background:#f1f5f9;border-radius:20px;"></div>
<div class="r" style="left:2869.00px;top:377.80px;width:6.80px;height:95.90px;background:#e2e8f0;"></div>
<svg class="i" style="left:2597.00px;top:400.50px;width:48.00px;height:48.00px;" viewBox="0 0 24 24" fill="none" stroke="#0f172a" stroke-width="2" stroke-linecap="round" stroke-linejoin="round"><path d="M12 3H5a2 2 0 0 0-2 2v14a2 2 0 0 0 2 2h14a2 2 0 0 0 2-2v-7"/><path d="M18.375 2.625a1 1 0 0 1 3 3l-9.013 9.014a2 2 0 0 1-.853.505l-2.873.84a.5.5 0 0 1-.62-.62l.84-2.873a2 2 0 0 1 .506-.852z"/></svg>
<div class="t" style="left:2664.00px;top:404.92px;font-size:41.20px;color:#0f172a;-webkit-text-stroke:0.99px #0f172a;letter-spacing:0.714px;">Annotate</div>
<svg class="i" style="left:2911.50px;top:407.70px;width:36.00px;height:36.00px;" viewBox="0 0 24 24" fill="none" stroke="#0f172a" stroke-width="2" stroke-linecap="round" stroke-linejoin="round"><path d="m6 9 6 6 6-6"/></svg>
<div class="r" style="left:3008.00px;top:377.80px;width:392.00px;height:95.90px;background:#f1f5f9;border-radius:20px;"></div>
<svg class="i" style="left:3044.00px;top:401.70px;width:48.00px;height:48.00px;" viewBox="0 0 24 24" fill="none" stroke="#0f172a" stroke-width="2" stroke-linecap="round" stroke-linejoin="round"><polyline points="4 17 10 11 4 5"/><line x1="12" x2="20" y1="19" y2="19"/></svg>
<div class="t" style="left:3103.00px;top:404.92px;font-size:41.20px;color:#0f172a;-webkit-text-stroke:0.99px #0f172a;letter-spacing:0.444px;">Playground</div>
<svg class="i" style="left:3328.00px;top:407.70px;width:36.00px;height:36.00px;" viewBox="0 0 24 24" fill="none" stroke="#0f172a" stroke-width="2" stroke-linecap="round" stroke-linejoin="round"><path d="m6 9 6 6 6-6"/></svg>
<div class="r" style="left:3412.00px;top:377.80px;width:120.00px;height:95.90px;background:#f1f5f9;border-radius:20px;"></div>
<svg class="i" style="left:3447.00px;top:401.70px;width:48.00px;height:48.00px;" viewBox="0 0 24 24" fill="none" stroke="#0f172a" stroke-width="2" stroke-linecap="round" stroke-linejoin="round"><path d="M7.9 20A9 9 0 1 0 4 16.1L2 22Z"/></svg>
<div class="r" style="left:1370.00px;top:559.00px;width:312.00px;height:69.00px;background:#e2e8f0;border-radius:16px;"></div>
<div class="t" style="left:1403.00px;top:575.28px;font-size:35.10px;color:#0f172a;-webkit-text-stroke:1.19px #0f172a;letter-spacing:1.308px;">Latency: 5.25s</div>
<div class="r" style="left:1694.00px;top:559.00px;width:329.00px;height:69.00px;background:#e2e8f0;border-radius:16px;"></div>
<div class="t" style="left:1727.00px;top:575.28px;font-size:35.10px;color:#0f172a;-webkit-text-stroke:1.19px #0f172a;letter-spacing:1.429px;">Env: production</div>
<div class="r" style="left:2035.00px;top:559.00px;width:669.00px;height:69.00px;background:#e2e8f0;border-radius:16px;"></div>
<div class="t" style="left:2070.00px;top:575.28px;font-size:35.10px;color:#0f172a;-webkit-text-stroke:1.19px #0f172a;letter-spacing:1.775px;">38 prompt</div>
<svg class="i" style="left:2253px;top:579px;width:31px;height:28px" viewBox="0 0 31 28"><path d="M3 14h24M18 5l9 9-9 9" fill="none" stroke="#0f172a" stroke-width="4.1" stroke-linecap="round" stroke-linejoin="round"/></svg>
<div class="t" style="left:2295.00px;top:575.28px;font-size:35.10px;color:#0f172a;-webkit-text-stroke:1.19px #0f172a;letter-spacing:1.167px;">2 completion (∑ 40)</div>
<div class="r" style="left:2716.00px;top:559.00px;width:347.00px;height:69.00px;background:#e2e8f0;border-radius:16px;"></div>
<div class="t" style="left:2750.00px;top:575.28px;font-size:35.10px;color:#0f172a;-webkit-text-stroke:1.19px #0f172a;letter-spacing:1.167px;">ollama/llama3</div>
<div class="r" style="left:3075.00px;top:559.00px;width:283.00px;height:69.00px;background:#e2e8f0;border-radius:16px;"></div>
<div class="t" style="left:3109.00px;top:575.28px;font-size:35.10px;color:#0f172a;-webkit-text-stroke:1.19px #0f172a;letter-spacing:1.250px;">stream: false</div>
<svg class="i" style="left:2634.50px;top:574.50px;width:37.00px;height:37.00px;" viewBox="0 0 24 24" fill="none" stroke="#0f172a" stroke-width="2" stroke-linecap="round" stroke-linejoin="round"><circle cx="12" cy="12" r="10"/><path d="M12 16v-4"/><path d="M12 8h.01"/></svg>
<svg class="i" style="left:2994.25px;top:575.25px;width:35.50px;height:35.50px;" viewBox="0 0 24 24" fill="none" stroke="#0f172a" stroke-width="2" stroke-linecap="round" stroke-linejoin="round"><circle cx="12" cy="12" r="10"/><path d="M8 12h8"/><path d="M12 8v8"/></svg>
<div class="t" style="left:1394.00px;top:661.16px;font-size:40.80px;color:#3f3f46;-webkit-text-stroke:0.98px #3f3f46;letter-spacing:0.167px;">Preview</div>
<div class="t" style="left:1590.00px;top:661.16px;font-size:40.80px;color:#3f3f46;-webkit-text-stroke:0.98px #3f3f46;letter-spacing:0.600px;">Scores</div>
<div class="r" style="left:1370.00px;top:734.00px;width:2188.00px;height:3.00px;background:#e2e8f0;"></div>
<div class="r" style="left:1370.00px;top:722.00px;width:196.00px;height:12.00px;background:#4f46e5;"></div>
<div class="r" style="left:3198.00px;top:653.00px;width:334.00px;height:75.00px;background:#f1f5f9;border-radius:18px;"></div>
<div class="r" style="left:3403.00px;top:659.00px;width:117.00px;height:63.00px;background:#fff;border-radius:14px;box-shadow:0 1px 3px rgba(0,0,0,0.08);"></div>
<div class="t" style="left:3222.00px;top:672.50px;font-size:34.60px;color:#64748b;-webkit-text-stroke:0.83px #64748b;letter-spacing:1.375px;">Formatted</div>
<div class="t" style="left:3417.00px;top:672.50px;font-size:34.60px;color:#0f172a;-webkit-text-stroke:0.83px #0f172a;letter-spacing:-0.333px;">JSON</div>
<div class="t" style="left:1381.00px;top:765.41px;font-size:40.50px;color:#3f3f46;-webkit-text-stroke:0.97px #3f3f46;letter-spacing:1.500px;">Input</div>
<svg class="i" style="left:3418.00px;top:767.00px;width:36.00px;height:36.00px;" viewBox="0 0 24 24" fill="none" stroke="#3f3f46" stroke-width="2" stroke-linecap="round" stroke-linejoin="round"><path d="M12 22v-6"/><path d="M12 8V2"/><path d="M4 12H2"/><path d="M10 12H8"/><path d="M16 12h-2"/><path d="M22 12h-2"/><path d="m15 19-3-3-3 3"/><path d="m15 5-3 3-3-3"/></svg>
<svg class="i" style="left:3478.00px;top:767.00px;width:36.00px;height:36.00px;" viewBox="0 0 24 24" fill="none" stroke="#3f3f46" stroke-width="2" stroke-linecap="round" stroke-linejoin="round"><rect width="14" height="14" x="8" y="8" rx="2" ry="2"/><path d="M4 16c-1.1 0-2-.9-2-2V4c0-1.1.9-2 2-2h10c1.1 0 2 .9 2 2"/></svg>
<div class="r" style="left:1370.60px;top:833.00px;width:2161.10px;height:128.00px;background:#f8fafc;border:3px solid #e2e8f0;border-radius:12px;box-sizing:border-box;"></div>
<div class="t" style="left:1406.50px;top:882.18px;font-size:33.70px;color:#032f62;font-family:'Liberation Mono', monospace;-webkit-text-stroke-width:0.4px;">"3 + 3 = "</div>
<div class="t" style="left:1382.00px;top:990.41px;font-size:40.50px;color:#3f3f46;-webkit-text-stroke:0.97px #3f3f46;letter-spacing:1.600px;">Output</div>
<svg class="i" style="left:3418.00px;top:992.00px;width:36.00px;height:36.00px;" viewBox="0 0 24 24" fill="none" stroke="#3f3f46" stroke-width="2" stroke-linecap="round" stroke-linejoin="round"><path d="M12 22v-6"/><path d="M12 8V2"/><path d="M4 12H2"/><path d="M10 12H8"/><path d="M16 12h-2"/><path d="M22 12h-2"/><path d="m15 19-3-3-3 3"/><path d="m15 5-3 3-3-3"/></svg>
<svg class="i" style="left:3478.00px;top:992.00px;width:36.00px;height:36.00px;" viewBox="0 0 24 24" fill="none" stroke="#3f3f46" stroke-width="2" stroke-linecap="round" stroke-linejoin="round"><rect width="14" height="14" x="8" y="8" rx="2" ry="2"/><path d="M4 16c-1.1 0-2-.9-2-2V4c0-1.1.9-2 2-2h10c1.1 0 2 .9 2 2"/></svg>
<div class="r" style="left:1370.60px;top:1058.50px;width:2161.10px;height:127.00px;background:#f0fdf4;border:3px solid #e2e8f0;border-radius:12px;box-sizing:border-box;"></div>
<div class="t" style="left:1406.50px;top:1106.78px;font-size:33.70px;color:#032f62;font-family:'Liberation Mono', monospace;-webkit-text-stroke-width:0.4px;">"6"</div>
<div class="t" style="left:1382.00px;top:1261.71px;font-size:40.50px;color:#3f3f46;-webkit-text-stroke:0.97px #3f3f46;letter-spacing:1.000px;">Metadata</div>
<svg class="i" style="left:3418.00px;top:1264.00px;width:36.00px;height:36.00px;" viewBox="0 0 24 24" fill="none" stroke="#3f3f46" stroke-width="2" stroke-linecap="round" stroke-linejoin="round"><path d="M12 22v-6"/><path d="M12 8V2"/><path d="M4 12H2"/><path d="M10 12H8"/><path d="M16 12h-2"/><path d="M22 12h-2"/><path d="m15 19-3-3-3 3"/><path d="m15 5-3 3-3-3"/></svg>
<svg class="i" style="left:3478.00px;top:1264.00px;width:36.00px;height:36.00px;" viewBox="0 0 24 24" fill="none" stroke="#3f3f46" stroke-width="2" stroke-linecap="round" stroke-linejoin="round"><rect width="14" height="14" x="8" y="8" rx="2" ry="2"/><path d="M4 16c-1.1 0-2-.9-2-2V4c0-1.1.9-2 2-2h10c1.1 0 2 .9 2 2"/></svg>
<div class="clip" style="left:1370.6px;top:1331px;width:2161px;height:672px;">
<div class="r" style="left:0;top:0;width:2161px;height:800px;border:3px solid #e2e8f0;border-radius:12px;box-sizing:border-box;background:#fff;"></div>
<div class="t" style="left:36.90px;top:49.68px;font-family:'Liberation Mono',monospace;font-size:33.7px;white-space:pre;-webkit-text-stroke-width:0.4px;"><span style="color:#005cc5">{</span><span style="color:#9dbde9;font-style:italic;font-size:30.3px;margin-left:-2.5px"> 3 Items</span><svg style="display:inline-block;vertical-align:-5px;width:24px;height:24px;margin-left:2px" viewBox="0 0 24 24" fill="none" stroke="#9dbde9" stroke-width="2.2" stroke-linecap="round" stroke-linejoin="round"><path d="m4 8 8 8 8-8"/></svg></div>
<div class="t" style="left:70.40px;top:99.78px;font-family:'Liberation Mono',monospace;font-size:33.7px;white-space:pre;-webkit-text-stroke-width:0.4px;"><span style="color:#005cc5">attributes: {</span><span style="color:#9dbde9;font-style:italic;font-size:30.3px;margin-left:-2.5px"> 20 Items</span><svg style="display:inline-block;vertical-align:-5px;width:24px;height:24px;margin-left:2px" viewBox="0 0 24 24" fill="none" stroke="#9dbde9" stroke-width="2.2" stroke-linecap="round" stroke-linejoin="round"><path d="m4 8 8 8 8-8"/></svg></div>
<div class="t" style="left:103.90px;top:149.88px;font-family:'Liberation Mono',monospace;font-size:33.7px;white-space:pre;-webkit-text-stroke-width:0.4px;"><span style="color:#005cc5">metadata: {...}</span></div>
<div class="t" style="left:103.90px;top:199.98px;font-family:'Liberation Mono',monospace;font-size:33.7px;white-space:pre;-webkit-text-stroke-width:0.4px;"><span style="color:#005cc5">llm.model_name: </span><span style="color:#032f62">"llama3"</span></div>
<div class="t" style="left:103.90px;top:250.08px;font-family:'Liberation Mono',monospace;font-size:33.7px;white-space:pre;-webkit-text-stroke-width:0.4px;"><span style="color:#005cc5">llm.request.type: </span><span style="color:#032f62">"acompletion"</span></div>
<div class="t" style="left:103.90px;top:300.18px;font-family:'Liberation Mono',monospace;font-size:33.7px;white-space:pre;-webkit-text-stroke-width:0.4px;"><span style="color:#005cc5">llm.provider: </span><span style="color:#032f62">"ollama"</span></div>
<div class="t" style="left:103.90px;top:350.28px;font-family:'Liberation Mono',monospace;font-size:33.7px;white-space:pre;-webkit-text-stroke-width:0.4px;"><span style="color:#005cc5">llm.is_streaming: </span><span style="color:#032f62">"False"</span></div>
<div class="t" style="left:103.90px;top:400.38px;font-family:'Liberation Mono',monospace;font-size:33.7px;white-space:pre;-webkit-text-stroke-width:0.4px;"><span style="color:#005cc5">llm.response.id: </span><span style="color:#032f62">"chatcmpl-d96622c0-c642-446f-b9ad-b7a430cb1505"</span></div>
<div class="t" style="left:103.90px;top:450.48px;font-family:'Liberation Mono',monospace;font-size:33.7px;white-space:pre;-webkit-text-stroke-width:0.4px;"><span style="color:#005cc5">llm.response.model: </span><span style="color:#032f62">"ollama/llama3"</span></div>
<div class="t" style="left:103.90px;top:500.58px;font-family:'Liberation Mono',monospace;font-size:33.7px;white-space:pre;-webkit-text-stroke-width:0.4px;"><span style="color:#005cc5">openinference.span.kind: </span><span style="color:#032f62">"LLM"</span></div>
<div class="t" style="left:103.90px;top:550.68px;font-family:'Liberation Mono',monospace;font-size:33.7px;white-space:pre;-webkit-text-stroke-width:0.4px;"><span style="color:#005cc5">input.value: </span><span style="color:#032f62">"3 + 3 = "</span></div>
<div class="t" style="left:103.90px;top:600.78px;font-family:'Liberation Mono',monospace;font-size:33.7px;white-space:pre;-webkit-text-stroke-width:0.4px;"><span style="color:#005cc5">llm.input_messages.0.message.role: </span><span style="color:#032f62">"system"</span></div>
<div class="t" style="left:103.90px;top:650.88px;font-family:'Liberation Mono',monospace;font-size:33.7px;white-space:pre;-webkit-text-stroke-width:0.4px;"><span style="color:#005cc5">llm.input_messages.0.message.content: </span><span style="color:#032f62">"You are a very accurate calculator. You output only the</span></div>
</div></body></html>
